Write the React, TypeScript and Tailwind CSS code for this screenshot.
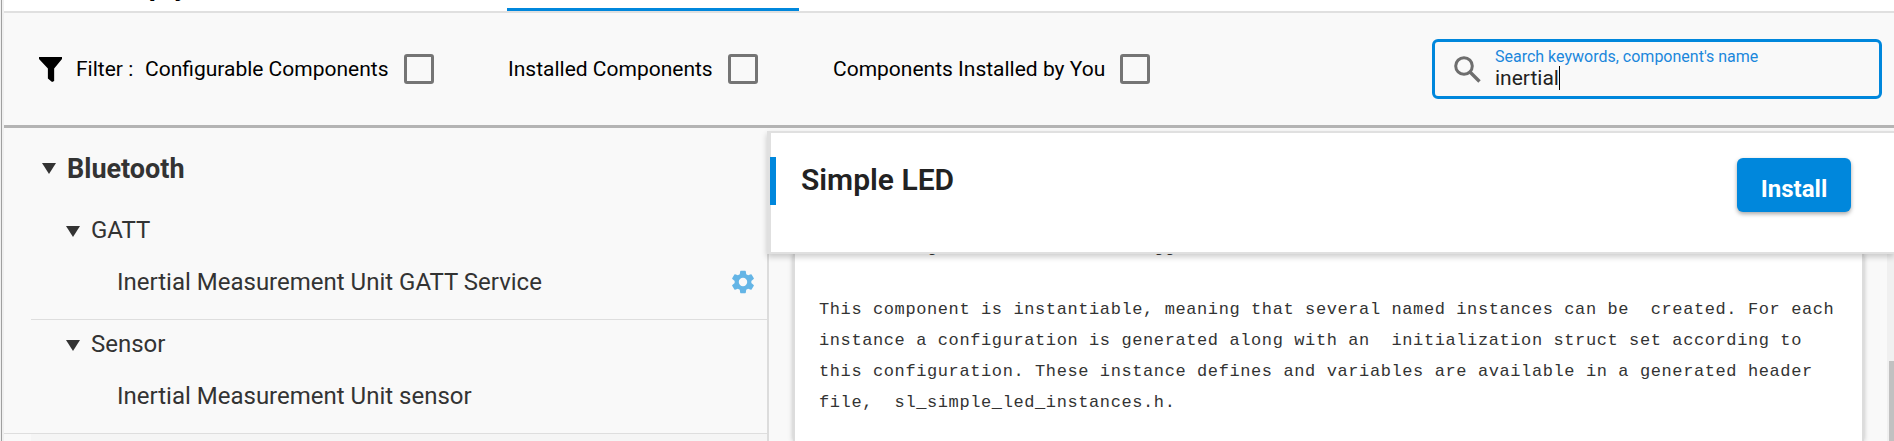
import React from "react";

function Check({ label, className }: { label: string; className: string }) {
  return (
    <label className={`flex items-center whitespace-nowrap ${className}`}>
      <span className="text-[21px] leading-[28px]">{label}</span>
      <span className="ml-auto size-[30px] rounded-[3px] border-[3px] border-[#757575]" />
    </label>
  );
}

function Caret() {
  return (
    <svg className="h-[11px] w-[14px] shrink-0" viewBox="0 0 14 11" fill="#333">
      <path d="M0 0H14L7 11Z" />
    </svg>
  );
}

export default function App() {
  return (
    <div className="flex h-[441px] w-[1894px] overflow-hidden bg-[#f9f9f9] font-['Roboto',sans-serif] text-black">
      <div className="w-[4px] shrink-0 border-l border-[#f0f0f0] bg-[#f0f0f0]">
        <div className="h-full w-px bg-[#a0a0a0]" />
      </div>
      <div className="flex min-w-0 flex-1 flex-col">
        <header className="relative flex h-[13px] shrink-0 items-end overflow-hidden border-b-2 border-[#e0e0e0] bg-white">
          <span className="absolute right-[1706px] bottom-[9px] text-[28px] leading-[32px] font-bold whitespace-nowrap">bt_soc_empty</span>
          <div className="ml-[503px] h-[3px] w-[292px] bg-[#0087dc]" />
        </header>

        <section className="flex h-[115px] shrink-0 items-center border-b-[3px] border-[#b4b4b4] pl-[35px]">
          <svg className="h-[25px] w-[23px] shrink-0" viewBox="0 0 22 25" preserveAspectRatio="none">
            <path d="M0 0H22V2L14.5 11.5V24L12.5 25L8.5 21.5V11.5L0 2Z" />
          </svg>
          <span className="ml-[14px] w-[69px] text-[21px] leading-[28px]">Filter :</span>
          <Check label="Configurable Components" className="w-[289px]" />
          <Check label="Installed Components" className="ml-[74px] w-[250px]" />
          <Check label="Components Installed by You" className="ml-[75px] w-[317px]" />
          <div className="mr-[12px] ml-auto flex h-[60px] w-[450px] items-center rounded-[6px] border-[3px] border-[#0087dc] pl-[19px]">
            <svg className="size-[27px] shrink-0" viewBox="0 0 27 27" fill="none" stroke="#6e6e6e">
              <circle cx="10" cy="10" r="8.3" strokeWidth="3" />
              <path d="M16 16L25.5 25.5" strokeWidth="3.4" />
            </svg>
            <div className="-mt-[2px] ml-[14px] flex flex-col">
              <span className="text-[16px] leading-[20px] text-[#1b87dc]">Search keywords, component's name</span>
              <span className="-mt-px flex items-center text-[21px] leading-[24px] text-[#222]">
                inertial<span className="h-[24px] w-px bg-black" />
              </span>
            </div>
          </div>
        </section>

        <main className="flex min-h-0 flex-1">
          <aside className="w-[763px] shrink-0 text-[#333]">
            <div className="flex h-[71px] items-center gap-[11px] pl-[38px] pt-[10px]">
              <Caret />
              <span className="text-[27px] leading-[32px] font-bold">Bluetooth</span>
            </div>
            <div className="ml-[27px] border-b border-[#dedede]">
              <div className="flex h-[64px] items-center gap-[11px] pl-[35px]">
                <Caret />
                <span className="-mt-[3px] text-[24px] leading-[28px]">GATT</span>
              </div>
              <div className="flex h-[56px] items-start justify-between pl-[86px] pr-[10px]">
                <span className="mt-[5px] text-[24px] leading-[28px]">Inertial Measurement Unit GATT Service</span>
                <svg className="mt-[5px] size-[28px]" viewBox="0 0 24 24" fill="#64b5e6">
                  <path d="M19.14 12.94c.04-.3.06-.61.06-.94 0-.32-.02-.64-.07-.94l2.03-1.58a.49.49 0 0 0 .12-.61l-1.92-3.32a.49.49 0 0 0-.59-.22l-2.39.96c-.5-.38-1.03-.7-1.62-.94l-.36-2.54a.48.48 0 0 0-.48-.41h-3.84c-.24 0-.43.17-.47.41l-.36 2.54c-.59.24-1.13.57-1.62.94l-2.39-.96a.49.49 0 0 0-.59.22L2.74 8.87c-.12.21-.08.47.12.61l2.03 1.58c-.05.3-.09.63-.09.94s.02.64.07.94l-2.03 1.58a.49.49 0 0 0-.12.61l1.92 3.32c.12.22.37.29.59.22l2.39-.96c.5.38 1.03.7 1.62.94l.36 2.54c.05.24.24.41.48.41h3.84c.24 0 .44-.17.47-.41l.36-2.54c.59-.24 1.13-.56 1.62-.94l2.39.96c.22.08.47 0 .59-.22l1.92-3.32a.49.49 0 0 0-.12-.61zM12 15.6a3.6 3.6 0 1 1 0-7.2 3.6 3.6 0 0 1 0 7.2" />
                </svg>
              </div>
            </div>
            <div className="border-b border-[#dedede] pl-[62px]">
              <div className="flex h-[50px] items-center gap-[11px]">
                <Caret />
                <span className="-mt-[3px] text-[24px] leading-[28px]">Sensor</span>
              </div>
              <div className="flex h-[63px] items-start pl-[51px]">
                <span className="mt-[12px] text-[24px] leading-[28px]">Inertial Measurement Unit sensor</span>
              </div>
            </div>
            <div className="ml-[27px] h-[10px] bg-[#f5f5f5]" />
          </aside>

          <section className="flex min-w-0 flex-1 flex-col pt-[3px]">
            <div className="z-10 flex h-[123px] shrink-0 items-start border-y-2 border-l-4 border-[#e0e0e0] bg-white shadow-[0_3px_6px_rgba(0,0,0,0.2)]">
              <div className="-ml-px mt-[24px] h-[48px] w-[6px] bg-[#0087dc]" />
              <h1 className="mt-[29px] ml-[25px] text-[30px] leading-[36px] font-semibold text-[#222]">Simple LED</h1>
              <button className="mt-[25px] mr-[43px] ml-auto flex h-[54px] w-[114px] items-center justify-center rounded-[6px] bg-[#0087dc] pt-[7px] text-[24px] leading-[28px] font-bold text-white shadow-[0_2px_4px_rgba(0,0,0,0.35)]">Install</button>
            </div>
            <div className="flex min-h-0 flex-1 border-l-2 border-[#dcdcdc]">
              <div className="ml-[24px] h-full w-[1071px] overflow-hidden border-x-2 border-[#dcdcdc] bg-white shadow-[0_0_5px_rgba(0,0,0,0.25)]">
                <pre className="-mt-[22px] ml-[24px] font-['Liberation_Mono',monospace] text-[17px] leading-[31px] tracking-[0.6px] text-[#333]">
{`LED turning it on or off and toggle

This component is instantiable, meaning that several named instances can be  created. For each
instance a configuration is generated along with an  initialization struct set according to
this configuration. These instance defines and variables are available in a generated header
file,  sl_simple_led_instances.h.`}
                </pre>
              </div>
              <div className="ml-auto w-[7px] bg-[#f0f0f0] pt-[107px] pl-[2px]">
                <div className="h-full bg-[#c1c1c1]" />
              </div>
            </div>
          </section>
        </main>
      </div>
    </div>
  );
}
